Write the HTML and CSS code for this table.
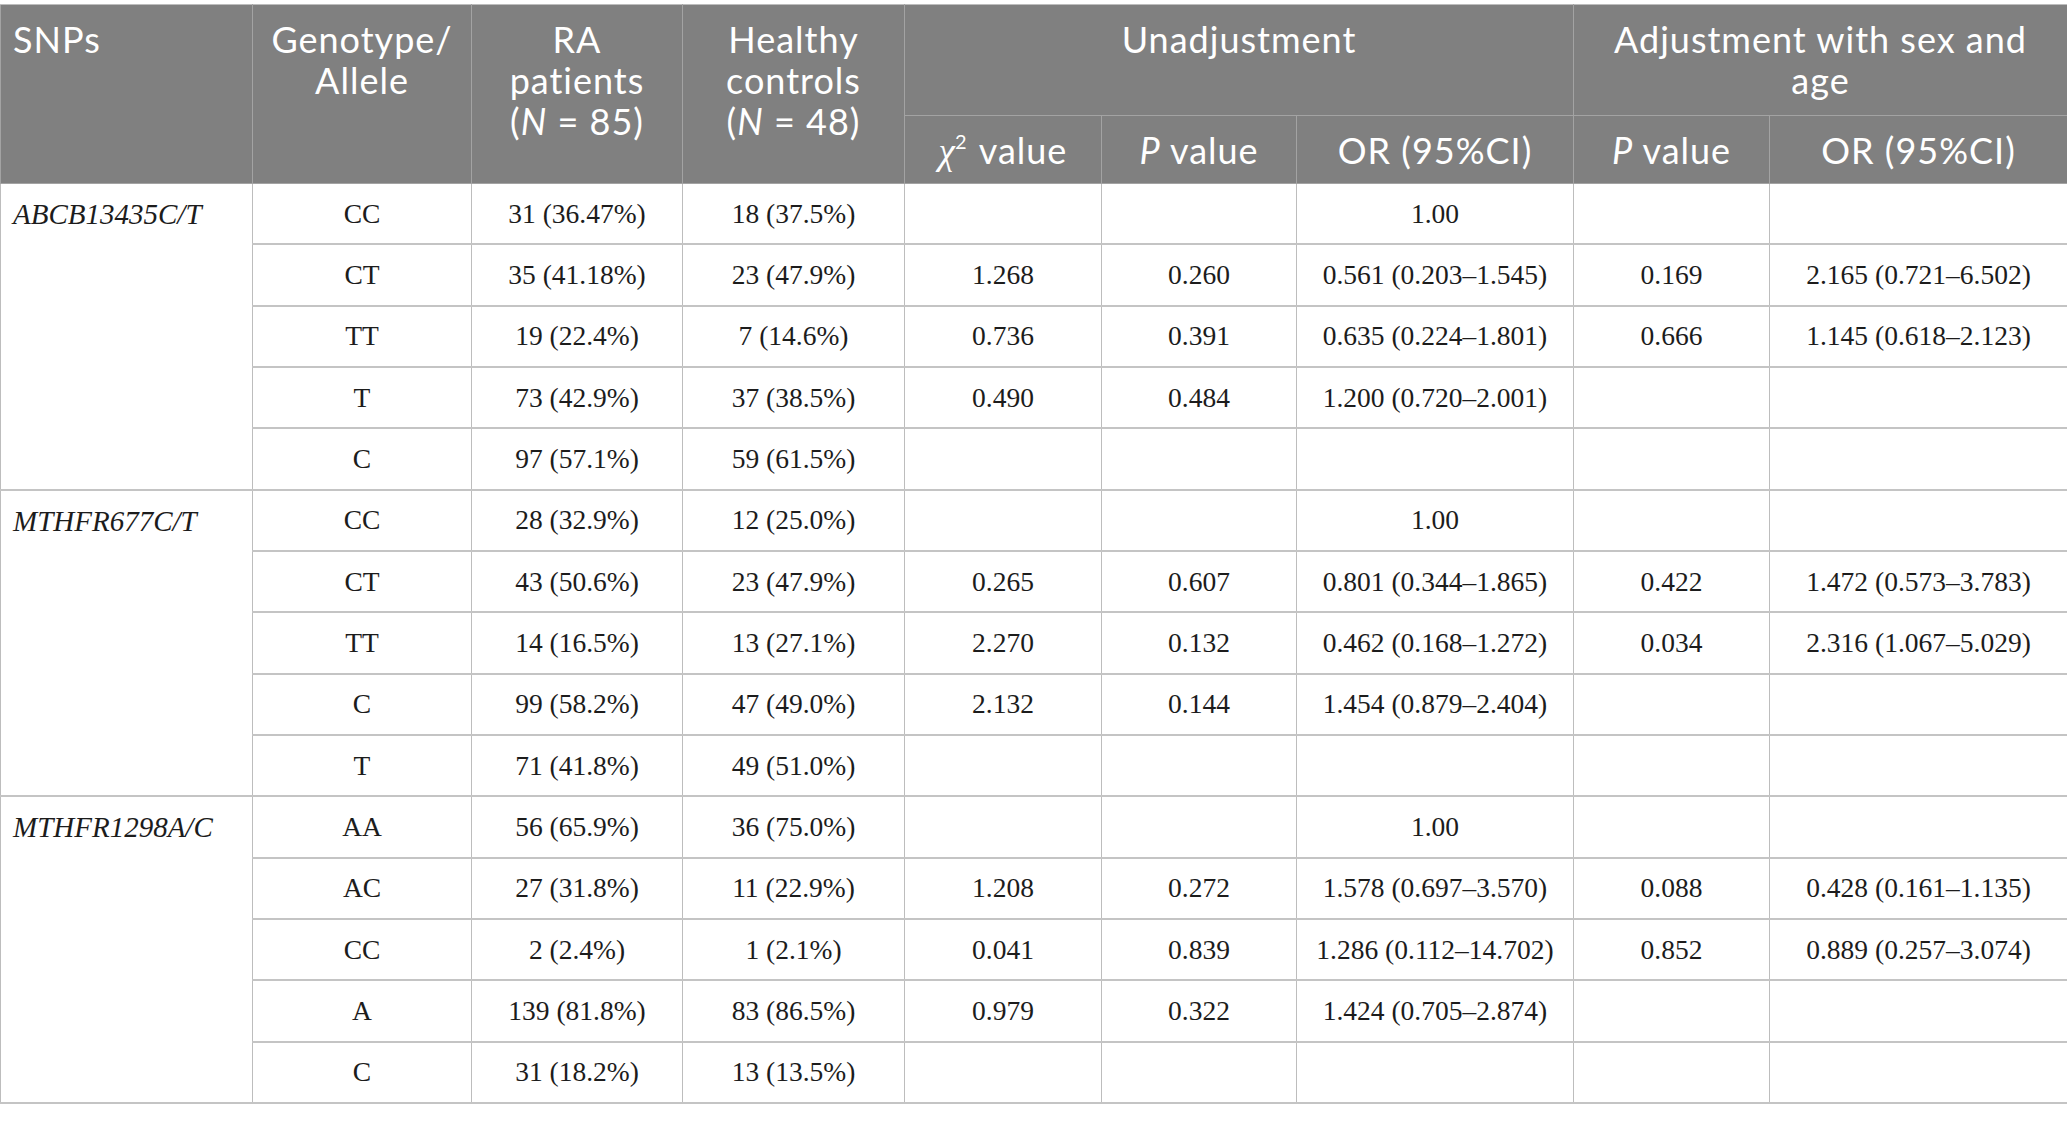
FILE: index.html
```html
<!DOCTYPE html>
<html lang="en">
<head>
<meta charset="utf-8">
<title>SNP association table</title>
<link rel="stylesheet" href="styles.css">
</head>
<body>
<table class="snp-table">
  <colgroup>
    <col class="c-snp"><col class="c-geno"><col class="c-ra"><col class="c-hc">
    <col class="c-chi"><col class="c-p"><col class="c-or"><col class="c-p2"><col class="c-or2">
  </colgroup>
  <thead>
    <tr class="h1">
      <th rowspan="2" class="left">SNPs</th>
      <th rowspan="2">Genotype/<br>Allele</th>
      <th rowspan="2">RA<br>patients<br>(<i>N</i> = 85)</th>
      <th rowspan="2">Healthy<br>controls<br>(<i>N</i> = 48)</th>
      <th colspan="3">Unadjustment</th>
      <th colspan="2">Adjustment with sex and<br>age</th>
    </tr>
    <tr class="h2">
      <th><i class="chi">χ</i><sup>2</sup> value</th>
      <th><i>P</i> value</th>
      <th>OR (95%CI)</th>
      <th><i>P</i> value</th>
      <th>OR (95%CI)</th>
    </tr>
  </thead>
  <tbody>
    <tr><td rowspan="5" class="snp">ABCB13435C/T</td><td>CC</td><td>31 (36.47%)</td><td>18 (37.5%)</td><td></td><td></td><td>1.00</td><td></td><td></td></tr>
    <tr><td>CT</td><td>35 (41.18%)</td><td>23 (47.9%)</td><td>1.268</td><td>0.260</td><td>0.561 (0.203–1.545)</td><td>0.169</td><td>2.165 (0.721–6.502)</td></tr>
    <tr><td>TT</td><td>19 (22.4%)</td><td>7 (14.6%)</td><td>0.736</td><td>0.391</td><td>0.635 (0.224–1.801)</td><td>0.666</td><td>1.145 (0.618–2.123)</td></tr>
    <tr><td>T</td><td>73 (42.9%)</td><td>37 (38.5%)</td><td>0.490</td><td>0.484</td><td>1.200 (0.720–2.001)</td><td></td><td></td></tr>
    <tr><td>C</td><td>97 (57.1%)</td><td>59 (61.5%)</td><td></td><td></td><td></td><td></td><td></td></tr>

    <tr><td rowspan="5" class="snp">MTHFR677C/T</td><td>CC</td><td>28 (32.9%)</td><td>12 (25.0%)</td><td></td><td></td><td>1.00</td><td></td><td></td></tr>
    <tr><td>CT</td><td>43 (50.6%)</td><td>23 (47.9%)</td><td>0.265</td><td>0.607</td><td>0.801 (0.344–1.865)</td><td>0.422</td><td>1.472 (0.573–3.783)</td></tr>
    <tr><td>TT</td><td>14 (16.5%)</td><td>13 (27.1%)</td><td>2.270</td><td>0.132</td><td>0.462 (0.168–1.272)</td><td>0.034</td><td>2.316 (1.067–5.029)</td></tr>
    <tr><td>C</td><td>99 (58.2%)</td><td>47 (49.0%)</td><td>2.132</td><td>0.144</td><td>1.454 (0.879–2.404)</td><td></td><td></td></tr>
    <tr><td>T</td><td>71 (41.8%)</td><td>49 (51.0%)</td><td></td><td></td><td></td><td></td><td></td></tr>

    <tr><td rowspan="5" class="snp">MTHFR1298A/C</td><td>AA</td><td>56 (65.9%)</td><td>36 (75.0%)</td><td></td><td></td><td>1.00</td><td></td><td></td></tr>
    <tr><td>AC</td><td>27 (31.8%)</td><td>11 (22.9%)</td><td>1.208</td><td>0.272</td><td>1.578 (0.697–3.570)</td><td>0.088</td><td>0.428 (0.161–1.135)</td></tr>
    <tr><td>CC</td><td>2 (2.4%)</td><td>1 (2.1%)</td><td>0.041</td><td>0.839</td><td>1.286 (0.112–14.702)</td><td>0.852</td><td>0.889 (0.257–3.074)</td></tr>
    <tr><td>A</td><td>139 (81.8%)</td><td>83 (86.5%)</td><td>0.979</td><td>0.322</td><td>1.424 (0.705–2.874)</td><td></td><td></td></tr>
    <tr><td>C</td><td>31 (18.2%)</td><td>13 (13.5%)</td><td></td><td></td><td></td><td></td><td></td></tr>
  </tbody>
</table>
</body>
</html>
```
FILE: styles.css
```css
html, body {
  margin: 0;
  padding: 0;
  background: #ffffff;
}

body {
  padding-top: 4px;
}

.snp-table {
  width: 2067px;
  table-layout: fixed;
  border-collapse: collapse;
  border: 1px solid #bdbdbd;
}

.c-snp { width: 252px; }
.c-geno { width: 219px; }
.c-ra { width: 211px; }
.c-hc { width: 222px; }
.c-chi { width: 197px; }
.c-p { width: 195px; }
.c-or { width: 277px; }
.c-p2 { width: 196px; }
.c-or2 { width: 298px; }

.snp-table thead th {
  background: #808080;
  color: #ffffff;
  font-family: "Lato", "Open Sans", sans-serif;
  font-weight: 400;
  font-size: 36px;
  letter-spacing: 1px;
  line-height: 41px;
  text-align: center;
  vertical-align: top;
  padding: 14px 6px 0 6px;
  border: 1px solid #a3a3a3;
  border-top-color: #bdbdbd;
}

.snp-table thead th.left {
  text-align: left;
  padding-left: 12px;
}

.snp-table thead th i {
  font-style: italic;
}

.snp-table .h1 {
  height: 111px;
}

.snp-table .h2 {
  height: 68px;
}

.snp-table .chi {
  font-family: "Liberation Serif", "DejaVu Serif", serif;
  font-size: 37px;
  letter-spacing: 0;
}

.snp-table sup {
  font-size: 20px;
  line-height: 0;
  vertical-align: 15px;
  letter-spacing: 0;
  margin-right: 2px;
}

.snp-table tbody td {
  font-family: "Liberation Serif", "Times New Roman", serif;
  font-size: 27.5px;
  color: #1c1c1c;
  text-align: center;
  vertical-align: middle;
  height: 59.33px;
  padding: 0 4px;
  border-left: 1px solid #bdbdbd;
  border-right: 1px solid #bdbdbd;
  border-bottom: 2px solid #c4c4c4;
  white-space: nowrap;
}

.snp-table tbody td.snp {
  font-style: italic;
  font-size: 29px;
  text-align: left;
  vertical-align: top;
  padding: 14px 12px 0 12px;
}
```
